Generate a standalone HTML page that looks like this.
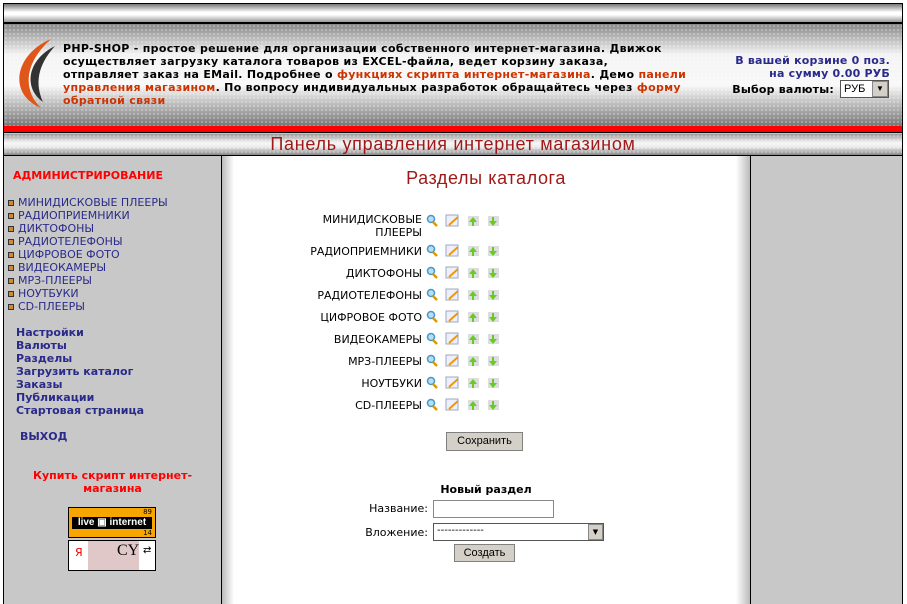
<!DOCTYPE html><html><head><meta charset="utf-8"><style>
*{margin:0;padding:0;box-sizing:border-box}
body{width:907px;height:604px;background:#fff;position:relative;overflow:hidden;font-family:Tahoma,"DejaVu Sans","Liberation Sans",sans-serif}
.a{position:absolute}
.hd{font-size:11px;font-weight:bold;line-height:13px;color:#000}
.r{color:#cc3300}
.cat{font-size:11px;color:#2a2a8a;line-height:13px}
.cat span{display:inline-block;width:6px;height:6px;background:#d08a30;border:1px solid #333;margin:0 4px 1px 0;vertical-align:middle}
.adm{font-size:11px;font-weight:bold;color:#2a2a8a;line-height:13px}
.lbl{font-size:11px;color:#000;text-align:right;width:130px;line-height:13px}
.btn{background:#d4d0c8;border:1px solid #808080;font-size:11px;text-align:center;font-family:"Liberation Sans",sans-serif}
</style></head><body>
<div class="a" style="left:3px;top:3px;width:900px;height:601px;border:1px solid #000;border-bottom:none;background:#c8c8c8"></div>
<div class="a" style="left:4px;top:4px;width:898px;height:18px;background:linear-gradient(#777,#fff 45%,#fff 60%,#999)"></div>
<div class="a" style="left:4px;top:22px;width:898px;height:2px;background:#000"></div>
<div class="a" style="left:4px;top:24px;width:898px;height:102px;background:radial-gradient(circle,rgba(255,255,255,.6) 0.6px,transparent 0.9px) 0 0/4px 4px,linear-gradient(#888,#f4f4f4 30%,#f8f8f8 60%,#777)"></div>
<svg class="a" style="left:11px;top:38px" width="44" height="72" viewBox="0 0 44 72"><path d="M40 1 C4 16 -4 56 30 70 C14 55 10 28 40 1Z" fill="#e0561a"/><path d="M44 8 C16 22 12 50 32 64 C24 46 26 28 44 8Z" fill="#333"/></svg>
<div class="a hd" style="left:63px;top:42px;white-space:nowrap;letter-spacing:0.3px">PHP-SHOP - простое решение для организации собственного интернет-магазина. Движок<br>осуществляет загрузку каталога товаров из EXCEL-файла, ведет корзину заказа,<br>отправляет заказ на EMail. Подробнее о <span class="r">функциях скрипта интернет-магазина</span>. Демо <span class="r">панели</span><br><span class="r">управления магазином</span>. По вопросу индивидуальных разработок обращайтесь через <span class="r">формy</span><br><span class="r">обратной связи</span></div>
<div class="a hd" style="left:690px;top:54px;width:200px;text-align:right;color:#2a2a8a;letter-spacing:0.2px">В вашей корзине 0 поз.<br>на сумму 0.00 РУБ</div>
<div class="a hd" style="left:690px;top:83px;width:144px;text-align:right;letter-spacing:0.2px">Выбор валюты:</div>
<div class="a" style="left:840px;top:80px;width:49px;height:18px;border:1px solid #555;background:#fff;font-size:11px;line-height:16px;padding-left:3px;font-family:'Liberation Sans',sans-serif">РУБ<div class="a" style="right:0;top:0;width:16px;height:16px;background:#d4d0c8;border:1px solid #888;font-size:8px;text-align:center;line-height:14px">▼</div></div>
<div class="a" style="left:4px;top:126px;width:898px;height:7px;background:#f00;border-bottom:1px solid #000"></div>
<div class="a" style="left:4px;top:134px;width:898px;height:21px;background:radial-gradient(circle,rgba(255,255,255,.6) 0.6px,transparent 0.9px) 0 0/4px 4px,linear-gradient(#999,#f4f4f4 40%,#eee 60%,#888)"></div>
<div class="a" style="left:4px;top:134px;width:898px;text-align:center;font-size:18px;letter-spacing:0.7px;color:#a01818;line-height:21px;font-family:'Liberation Sans',sans-serif">Панель управления интернет магазином</div>
<div class="a" style="left:4px;top:155px;width:898px;height:1px;background:#000"></div>
<div class="a" style="left:221px;top:156px;width:1px;height:448px;background:#000"></div>
<div class="a" style="left:222px;top:156px;width:528px;height:448px;background:linear-gradient(90deg,#bbb,#fff 12px,#fff 514px,#bbb)"></div>
<div class="a" style="left:750px;top:156px;width:1px;height:448px;background:#000"></div>
<div class="a" style="left:13px;top:169px;font-size:11px;font-weight:bold;color:#f00">АДМИНИСТРИРОВАНИЕ</div>
<div class="a cat" style="left:8px;top:196px">
<div><span></span>МИНИДИСКОВЫЕ ПЛЕЕРЫ</div><div><span></span>РАДИОПРИЕМНИКИ</div><div><span></span>ДИКТОФОНЫ</div><div><span></span>РАДИОТЕЛЕФОНЫ</div><div><span></span>ЦИФРОВОЕ ФОТО</div><div><span></span>ВИДЕОКАМЕРЫ</div><div><span></span>МРЗ-ПЛЕЕРЫ</div><div><span></span>НОУТБУКИ</div><div><span></span>CD-ПЛЕЕРЫ</div></div>
<div class="a adm" style="left:16px;top:326px">Настройки<br>Валюты<br>Разделы<br>Загрузить каталог<br>Заказы<br>Публикации<br>Стартовая страница</div>
<div class="a adm" style="left:20px;top:430px">ВЫХОД</div>
<div class="a" style="left:4px;top:469px;width:217px;text-align:center;font-size:11px;font-weight:bold;color:#f00;line-height:13px">Купить скрипт интернет-<br>магазина</div>
<div class="a" style="left:68px;top:507px;width:88px;height:31px;background:#f7a600;border:1px solid #000"><div class="a" style="left:3px;top:9px;width:80px;height:12px;background:#000;color:#fff;font-size:10px;font-weight:bold;line-height:12px;text-align:center;font-family:'Liberation Sans',sans-serif">live ▣ internet</div><div class="a" style="right:3px;top:0;font-size:7px;line-height:9px">89</div><div class="a" style="right:3px;top:21px;font-size:7px;line-height:9px">14</div></div>
<div class="a" style="left:68px;top:540px;width:88px;height:31px;background:#fff;border:1px solid #000"><div class="a" style="left:19px;top:0;width:51px;height:29px;background:#e0c8c8"></div><div class="a" style="left:6px;top:5px;color:#e00;font-size:11px">Я</div><div class="a" style="left:48px;top:1px;font-size:16px;font-family:'Liberation Serif',serif">CY</div><div class="a" style="left:74px;top:4px;font-size:10px">⇄</div></div>
<div class="a" style="left:222px;top:168px;width:528px;text-align:center;font-size:18px;letter-spacing:0.6px;color:#a01818;font-family:'Liberation Sans',sans-serif">Разделы каталога</div>
<div class="a lbl" style="left:292px;top:213px">МИНИДИСКОВЫЕ<br>ПЛЕЕРЫ</div>
<div class="a lbl" style="left:292px;top:245px">РАДИОПРИЕМНИКИ</div>
<div class="a lbl" style="left:292px;top:267px">ДИКТОФОНЫ</div>
<div class="a lbl" style="left:292px;top:289px">РАДИОТЕЛЕФОНЫ</div>
<div class="a lbl" style="left:292px;top:311px">ЦИФРОВОЕ ФОТО</div>
<div class="a lbl" style="left:292px;top:333px">ВИДЕОКАМЕРЫ</div>
<div class="a lbl" style="left:292px;top:355px">МРЗ-ПЛЕЕРЫ</div>
<div class="a lbl" style="left:292px;top:377px">НОУТБУКИ</div>
<div class="a lbl" style="left:292px;top:399px">CD-ПЛЕЕРЫ</div>
<svg class="a" style="left:425px;top:210px" width="80" height="210">
<defs><g id="r"><circle cx="6" cy="5" r="3.5" fill="#bde" stroke="#49c" stroke-width="1.5"/><path d="M8 8l4 4" stroke="#d90" stroke-width="2.5"/><rect x="21" y="1" width="12" height="11" fill="#eef" stroke="#9ab"/><path d="M24 11l9-8" stroke="#e90" stroke-width="2"/><rect x="43" y="2" width="11" height="10" fill="#ddd"/><path d="M47 12v-4h-3l4-5 4 5h-3v4z" fill="#6c2"/><rect x="63" y="2" width="11" height="10" fill="#ddd"/><path d="M67 3v4h-3l4 5 4-5h-3v-4z" fill="#6c2"/></g></defs>
<use href="#r" y="4"/><use href="#r" y="34"/><use href="#r" y="56"/><use href="#r" y="78"/><use href="#r" y="100"/><use href="#r" y="122"/><use href="#r" y="144"/><use href="#r" y="166"/><use href="#r" y="188"/></svg>
<div class="a btn" style="left:446px;top:432px;width:77px;height:19px;line-height:17px">Сохранить</div>
<div class="a" style="left:222px;top:483px;width:528px;text-align:center;font-size:11px;font-weight:bold">Новый раздел</div>
<div class="a" style="left:340px;top:502px;width:88px;text-align:right;font-size:11px">Название:</div>
<div class="a" style="left:433px;top:500px;width:121px;height:18px;border:1px solid #888;background:#fff"></div>
<div class="a" style="left:340px;top:526px;width:88px;text-align:right;font-size:11px">Вложение:</div>
<div class="a" style="left:433px;top:523px;width:171px;height:18px;border:1px solid #555;background:#fff;font-size:10px;line-height:14px;padding-left:3px">-------------<div class="a" style="right:0;top:0;width:15px;height:16px;background:#d4d0c8;border:1px solid #888;font-size:7px;text-align:center;line-height:14px">▼</div></div>
<div class="a btn" style="left:454px;top:544px;width:61px;height:18px;line-height:16px">Создать</div>
</body></html>
